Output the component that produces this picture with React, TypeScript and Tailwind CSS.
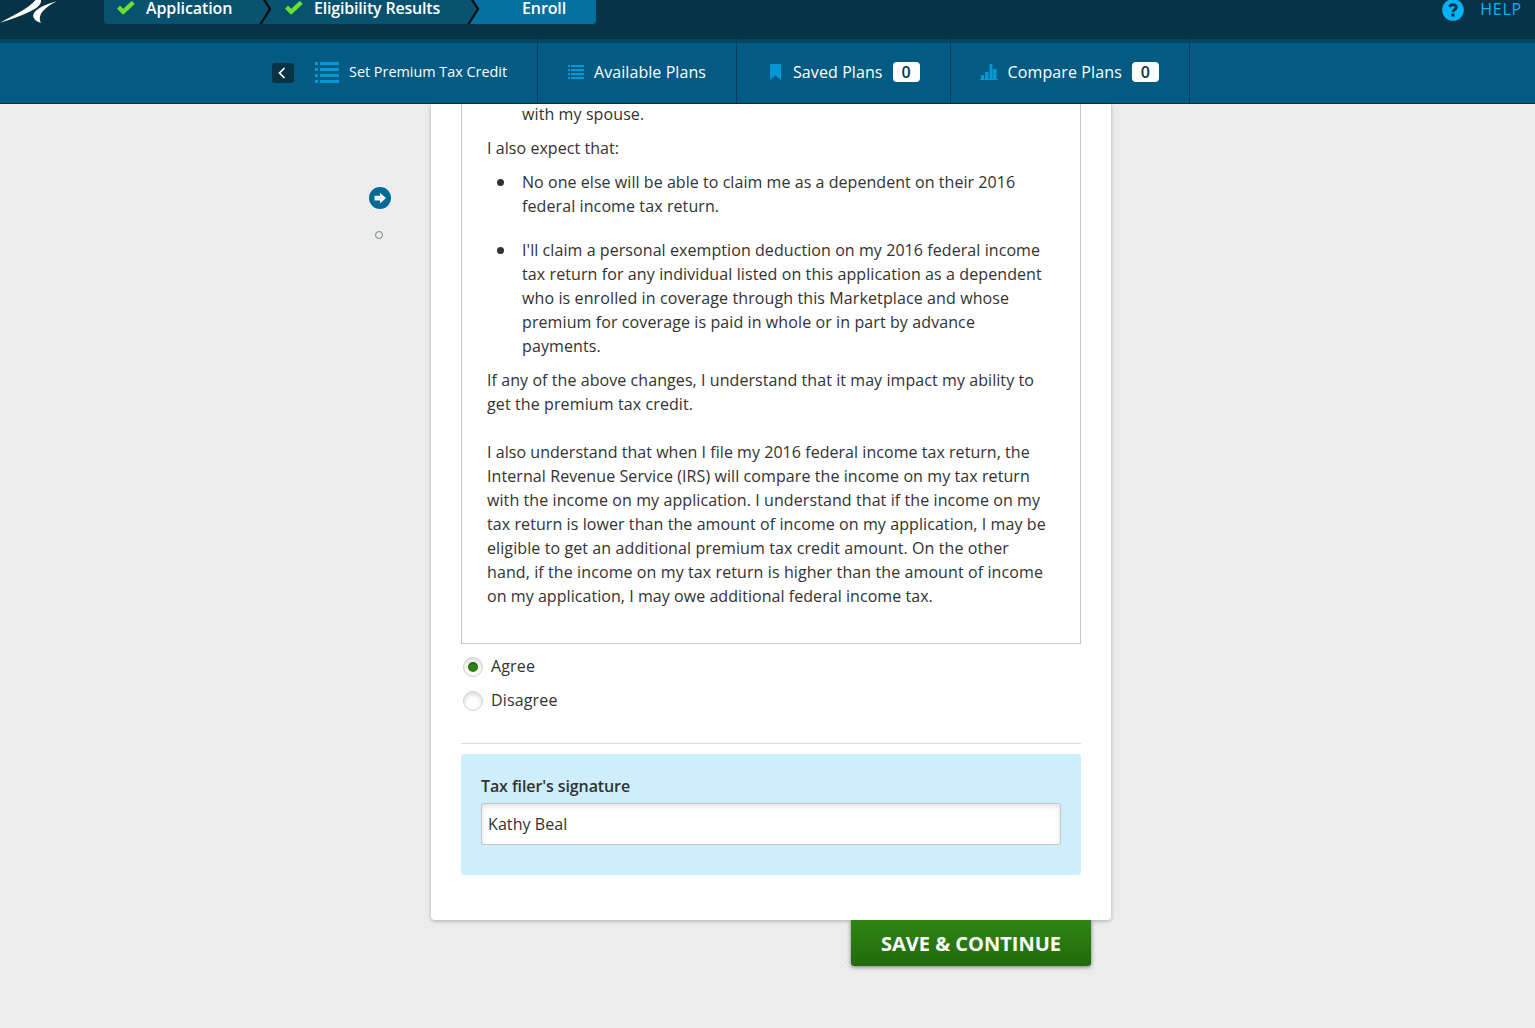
import type { ReactNode } from 'react';

function ListIcon({ className }: { className: string }) {
  return (
    <svg className={className} viewBox="0 0 24 21" preserveAspectRatio="none" fill="#0298d3" shapeRendering="crispEdges">
      {[0, 6, 12, 18].map((y) => (
        <g key={y}>
          <rect x="0" y={y} width="3" height="3" />
          <rect x="5" y={y} width="19" height="3" />
        </g>
      ))}
    </svg>
  );
}

function SmallListIcon() {
  return (
    <svg className="h-[14px] w-4 shrink-0" viewBox="0 0 16 14" fill="#0298d3" shapeRendering="crispEdges">
      {[0, 4, 8, 12].map((y) => (
        <g key={y}>
          <rect x="0" y={y} width="2" height="2" />
          <rect x="3" y={y} width="13" height="2" />
        </g>
      ))}
    </svg>
  );
}

function Check() {
  return (
    <svg className="h-[14px] w-[18px] shrink-0" viewBox="0 0 18 14">
      <path d="M1.5 6.2 L6.2 10.8 L16.3 1.4" fill="none" stroke="#6ae034" strokeWidth="4.4" />
    </svg>
  );
}

function Chevron({ right }: { right: string }) {
  return (
    <svg className="h-6 w-[14px] shrink-0" viewBox="0 0 14 24">
      <path d="M5 0 L12 9 L2 24 H14 V0 Z" fill={right} />
      <path d="M5 -2 L12 9 L2 25" fill="none" stroke="#020b10" strokeWidth="2.2" />
    </svg>
  );
}

function Count() {
  return (
    <span className="ml-[10px] flex h-5 w-[27px] items-center justify-center rounded-[4px] bg-white text-[16px] font-semibold leading-5 text-[#063346]">
      0
    </span>
  );
}

function Line({ children, className = '' }: { children: ReactNode; className?: string }) {
  return <span className={`block whitespace-nowrap ${className}`}>{children}</span>;
}

function Radio({ label, checked }: { label: string; checked?: boolean }) {
  return (
    <label className="flex h-[34px] items-center">
      <span className="mt-[2px] flex size-5 items-center justify-center rounded-full border border-[#cfcfcf] bg-white shadow-[inset_0_2px_4px_rgba(0,0,0,0.16)]">
        {checked && <span className="size-[10px] rounded-full bg-[#2b8212] shadow-[inset_0_1px_2px_rgba(0,0,0,0.3)]" />}
      </span>
      <span className="ml-[7.6px] tracking-[0.15px]">{label}</span>
    </label>
  );
}

export default function App() {
  return (
    <div className="flex h-[1028px] w-[1535px] flex-col overflow-hidden bg-[#efefef] bg-[conic-gradient(rgba(0,0,0,0.02)_25%,transparent_0_50%,rgba(0,0,0,0.02)_0_75%,transparent_0)] bg-[length:4px_4px] font-['Open_Sans',sans-serif] text-[16px] leading-6 text-[#323232]">
      <header className="flex h-[39px] shrink-0 items-start bg-[#063346] text-white">
        <svg className="h-6 w-[60px] shrink-0" viewBox="0 0 60 24" fill="#fff">
          <path d="M0 22.8 C13 15.5 29 8.5 35.5 0 H41 C41.5 4.5 37 8 31 11 C21 16 11 19.5 0 22.8Z" />
          <path d="M57 1.2 C45 4.5 36 8.5 33.5 14 C32.2 18 36 22 41 22.7 C39 19.5 39.5 15.5 42.5 11.5 C46 7.5 50.5 4.2 57 1.2Z" />
        </svg>
        <div className="ml-[44px] flex h-6 w-[492px] items-start rounded-b-[4px] bg-[#07526f] font-semibold">
          <div className="flex w-[154px] pl-[13px]">
            <div className="mt-px"><Check /></div>
            <span className="-mt-1 ml-[11px] tracking-[-0.1px]">Application</span>
          </div>
          <Chevron right="#07526f" />
          <div className="flex w-[194px] pl-[13px]">
            <div className="mt-px"><Check /></div>
            <span className="-mt-1 ml-[11px] whitespace-nowrap tracking-[-0.18px]">Eligibility Results</span>
          </div>
          <Chevron right="#0470a0" />
          <div className="h-6 flex-1 rounded-br-[4px] bg-[#0470a0] pl-[42px]">
            <span className="-mt-1 block tracking-[-0.1px]">Enroll</span>
          </div>
        </div>
        <div className="ml-auto flex pr-[13px] text-[#00b3f6]">
          <svg className="-mt-px h-[22px] w-[22px]" viewBox="0 0 22 22">
            <circle cx="11" cy="11" r="10.8" fill="#00b3f6" />
            <path d="M7.4 7.8 Q8.5 5.6 11.2 5.6 Q14.3 5.8 14.2 8.3 Q14.1 9.8 12.4 10.7 Q11 11.5 11 13.2" fill="none" stroke="#063346" strokeWidth="2.8" />
            <rect x="9.5" y="14.6" width="3" height="3" fill="#063346" />
          </svg>
          <span className="-mt-[3px] ml-4 font-medium tracking-[0.8px]">HELP</span>
        </div>
      </header>

      <nav className="flex h-[65px] shrink-0 border-b border-t-4 border-b-[#063346] border-t-[#024564] bg-[#015b82] text-white">
        <div className="-mt-1 flex w-[538px] items-center border-r border-[#063c55] pl-[272px] pt-1 text-[14.4px]">
          <span className="flex h-5 w-[22px] items-center justify-center rounded-[3px] bg-[#063346] pr-[2px]">
            <svg className="h-[12px] w-2" viewBox="0 0 8 12">
              <path d="M6.5 1 L1.5 6 L6.5 11" fill="none" stroke="#fff" strokeWidth="1.7" />
            </svg>
          </span>
          <ListIcon className="-mt-[2px] ml-[21px] h-[21px] w-6 shrink-0" />
          <span className="-mt-[3px] ml-[10px] whitespace-nowrap">Set Premium Tax Credit</span>
        </div>
        <div className="-mt-1 flex w-[199px] items-center border-r border-[#063c55] pb-[2px] pl-[30px] pt-1">
          <SmallListIcon />
          <span className="ml-[10px] tracking-[0.07px]">Available Plans</span>
        </div>
        <div className="-mt-1 flex w-[214px] items-center border-r border-[#063c55] pb-[2px] pl-[33px] pt-1">
          <svg className="h-4 w-[11px]" viewBox="0 0 11 16" fill="#0298d3"><path d="M0 0 H11 V16 L5.5 11.5 L0 16Z" /></svg>
          <span className="ml-3 tracking-[0.09px]">Saved Plans</span>
          <Count />
        </div>
        <div className="-mt-1 flex w-[239px] items-center border-r border-[#063c55] pb-[2px] pl-[29px] pt-1">
          <svg className="h-4 w-[18px]" viewBox="0 0 18 16" fill="#0298d3">
            <path d="M0 15 H1 V11 H4 V15 H5 V8 H8.5 V15 H9.5 V0 H12.5 V15 H13 V5 H16.5 V15 H18 V16 H0Z" />
          </svg>
          <span className="ml-[9.5px] tracking-[0.12px]">Compare Plans</span>
          <Count />
        </div>
      </nav>

      <main className="flex flex-1">
        <aside className="flex w-[431px] flex-col pl-[368px] pt-[83px]">
          <svg className="size-[23px]" viewBox="0 0 23 23">
            <circle cx="12" cy="11" r="11" fill="#036a97" />
            <path d="M6.5 8.8 H12 V5.8 L18 11.1 L12 16.4 V13.4 H6.5Z" fill="#f2f2f2" />
          </svg>
          <span className="ml-[7px] mt-[21px] size-2 rounded-full border border-[#6e8592]" />
        </aside>
        <div className="flex w-[680px] flex-col">
          <section className="h-[816px] rounded-b-[4px] bg-white px-[30px] shadow-[0_1px_4px_rgba(0,0,0,0.28)]">
            <div className="h-[540px] overflow-hidden border border-t-0 border-[#c6c6c6] px-[25px]">
              <p className="-mt-[2px] pl-[35px] tracking-[0.1px]">with my spouse.</p>
              <p className="mt-[10px] tracking-[0.06px]">I also expect that:</p>
              <ul className="mt-[10px] flex list-none flex-col gap-5">
                <li className="flex">
                  <span className="ml-[9.5px] mr-[18.5px] mt-[8.5px] size-[7px] shrink-0 rounded-full bg-[#323232]" />
                  <div>
                    <Line className="tracking-[0.054px]">No one else will be able to claim me as a dependent on their 2016</Line>
                    <Line className="tracking-[0.1px]">federal income tax return.</Line>
                  </div>
                </li>
                <li className="flex">
                  <span className="ml-[9.5px] mr-[18.5px] mt-[8.5px] size-[7px] shrink-0 rounded-full bg-[#323232]" />
                  <div>
                    <Line className="tracking-[0.075px]">I'll claim a personal exemption deduction on my 2016 federal income</Line>
                    <Line className="tracking-[0.1px]">tax return for any individual listed on this application as a dependent</Line>
                    <Line className="tracking-[0.11px]">who is enrolled in coverage through this Marketplace and whose</Line>
                    <Line className="tracking-[0.1px]">premium for coverage is paid in whole or in part by advance</Line>
                    <Line className="tracking-[0.1px]">payments.</Line>
                  </div>
                </li>
              </ul>
              <p className="mt-[10px]">
                <Line className="tracking-[0.073px]">If any of the above changes, I understand that it may impact my ability to</Line>
                <Line className="tracking-[0.11px]">get the premium tax credit.</Line>
              </p>
              <p className="mt-6">
                <Line className="tracking-[0.045px]">I also understand that when I file my 2016 federal income tax return, the</Line>
                <Line className="tracking-[0.085px]">Internal Revenue Service (IRS) will compare the income on my tax return</Line>
                <Line className="tracking-[0.09px]">with the income on my application. I understand that if the income on my</Line>
                <Line className="tracking-[0.082px]">tax return is lower than the amount of income on my application, I may be</Line>
                <Line className="tracking-[0.1px]">eligible to get an additional premium tax credit amount. On the other</Line>
                <Line className="tracking-[0.097px]">hand, if the income on my tax return is higher than the amount of income</Line>
                <Line className="tracking-[0.055px]">on my application, I may owe additional federal income tax.</Line>
              </p>
            </div>
            <div className="flex flex-col pl-[2.4px] pt-[5px]">
              <Radio label="Agree" checked />
              <Radio label="Disagree" />
            </div>
            <hr className="mt-[26px] border-t border-[#dcdcdc]" />
            <div className="mt-[10px] h-[121px] rounded-[4px] bg-[#ceeefc] px-5 pt-5">
              <label htmlFor="signature" className="block font-semibold tracking-[-0.1px]">Tax filer's signature</label>
              <input
                id="signature"
                defaultValue="Kathy Beal"
                className="mt-[5px] block h-[42px] w-full rounded-[2px] border border-[#c6c6c6] bg-white px-[6px] tracking-[0.08px] shadow-[inset_0_2px_5px_rgba(0,0,0,0.13)]"
              />
            </div>
          </section>
          <button className="relative mr-5 h-[46px] w-[240px] self-end rounded-b-[3px] bg-linear-to-b from-[#2f8612] to-[#226a0d] pt-px text-[20px] font-bold text-white shadow-[0_1px_4px_rgba(0,0,0,0.5)] [clip-path:inset(0_-6px_-8px_-6px)]">
            SAVE &amp; CONTINUE
          </button>
        </div>
      </main>
    </div>
  );
}
